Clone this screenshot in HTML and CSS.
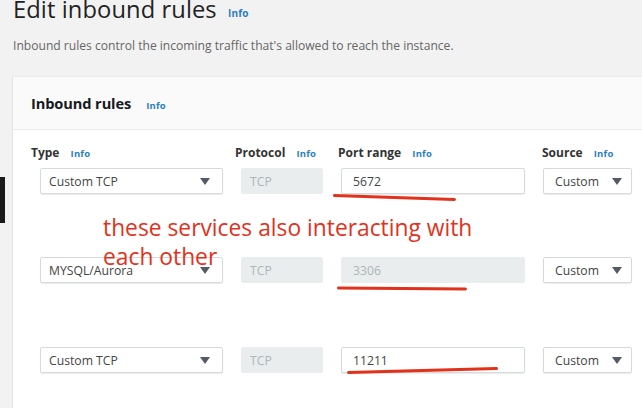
FILE: index.html
```html
<!DOCTYPE html>
<html lang="en">
<head>
<meta charset="utf-8">
<title>Edit inbound rules</title>
<link rel="stylesheet" href="styles.css">
</head>
<body>
<div class="page">
  <h1 class="title">Edit inbound rules <span class="info info-title">Info</span></h1>
  <p class="desc">Inbound rules control the incoming traffic that's allowed to reach the instance.</p>

  <section class="panel">
    <header class="panel-head">
      <h2 class="panel-title">Inbound rules</h2>
      <span class="info info-panel">Info</span>
    </header>
    <div class="rules">
      <div class="col-head h-type">Type <span class="info">Info</span></div>
      <div class="col-head h-proto">Protocol <span class="info">Info</span></div>
      <div class="col-head h-port">Port range <span class="info">Info</span></div>
      <div class="col-head h-src">Source <span class="info">Info</span></div>

      <div class="field select c-type">Custom TCP <span class="caret"></span></div>
      <div class="field disabled c-proto">TCP</div>
      <div class="field c-port">5672</div>
      <div class="field select c-src">Custom <span class="caret"></span></div>

      <div class="field select c-type row2">MYSQL/Aurora <span class="caret"></span></div>
      <div class="field disabled c-proto row2">TCP</div>
      <div class="field disabled c-port row2">3306</div>
      <div class="field select c-src row2">Custom <span class="caret"></span></div>

      <div class="field select c-type row3">Custom TCP <span class="caret"></span></div>
      <div class="field disabled c-proto row3">TCP</div>
      <div class="field c-port row3">11211</div>
      <div class="field select c-src row3">Custom <span class="caret"></span></div>
    </div>
  </section>

  <div class="edge-bar"></div>
  <p class="note">these services also interacting with<br>each other</p>
  <div class="mark mark-1"></div>
  <div class="mark mark-2"></div>
  <div class="mark mark-3"></div>
</div>
</body>
</html>
```

FILE: styles.css
```css
* { box-sizing: border-box; }

html, body {
  margin: 0;
  padding: 0;
  background: #f2f2f2;
}

body {
  width: 642px;
  height: 408px;
  overflow: hidden;
  font-family: "Open Sans", "Noto Sans", sans-serif;
  color: #16191f;
}

.page {
  position: relative;
  display: flow-root;
  height: 408px;
}

.title {
  margin: -6px 0 0 13px;
  font-size: 23.7px;
  line-height: 30px;
  font-weight: 400;
  color: #222;
  letter-spacing: 0.1px;
}

.info {
  color: #2a7fc0;
  font-size: 9.5px;
  font-weight: 700;
  letter-spacing: 0.2px;
}

.info-title {
  font-size: 10px;
  margin-left: 5px;
  vertical-align: 1px;
}

.desc {
  margin: 10px 0 0 13px;
  font-size: 12.1px;
  line-height: 16px;
  color: #666;
}

.panel {
  margin: 22px 0 0 12px;
  background: #fff;
  border-left: 1px solid #e3e3e3;
  border-top: 1px solid #ececec;
  height: 340px;
}

.panel-head {
  display: flex;
  align-items: baseline;
  gap: 15px;
  height: 53px;
  padding: 16px 0 0 18px;
  background: #fafafa;
  border-bottom: 1px solid #ebebeb;
}

.panel-title {
  margin: 0;
  font-size: 14.6px;
  font-weight: 700;
  color: #16191f;
  letter-spacing: -0.1px;
}

.rules {
  display: grid;
  grid-template-columns: 204px 103px 204px 100px;
  grid-auto-rows: auto;
  padding: 14px 0 0 18px;
}

.col-head {
  font-size: 12px;
  font-weight: 700;
  color: #333;
  line-height: 17px;
  white-space: nowrap;
}

.col-head .info { margin-left: 8px; }

.field {
  display: flex;
  align-items: center;
  height: 26px;
  padding: 0 8px;
  font-size: 12.2px;
  color: #444;
  background: #fff;
  border: 1px solid #d5dbdb;
  border-radius: 2px;
  box-shadow: 0 1px 1px rgba(0, 0, 0, 0.08);
  white-space: nowrap;
}

.select { justify-content: space-between; }

.caret {
  width: 0;
  height: 0;
  border-left: 5px solid transparent;
  border-right: 5px solid transparent;
  border-top: 7px solid #545b64;
  margin-top: 1px;
}

.disabled {
  background: #eaeded;
  border-color: #eaeded;
  box-shadow: none;
  color: #aab7b8;
}

.c-type { margin: 6px 0 0 9px; width: 183px; padding-right: 12px; }
.c-proto { margin: 6px 0 0 6px; width: 82px; }
.c-port { margin: 6px 0 0 3px; width: 184px; padding-left: 11px; }
.c-src { margin: 6px 0 0 1px; width: 89px; padding-left: 11px; padding-right: 9px; }

.rules > .row2 { margin-top: 63px; }
.rules > .row3 { margin-top: 64px; }

.edge-bar {
  position: absolute;
  left: 0;
  top: 177px;
  width: 5px;
  height: 46px;
  background: #1a1a1a;
}

.note {
  position: absolute;
  left: 103px;
  top: 213px;
  margin: 0;
  font-size: 22.8px;
  line-height: 29px;
  color: #e2321c;
  white-space: nowrap;
}

.mark {
  position: absolute;
  height: 2.5px;
  background: #e2321c;
  border-radius: 2px;
}

.mark-1 { left: 333px; top: 196px; width: 123px; transform: rotate(1.8deg); }
.mark-2 { left: 337px; top: 286.5px; width: 130px; transform: rotate(0.4deg); }
.mark-3 { left: 347px; top: 369px; width: 151px; transform: rotate(-1.5deg); }
```
